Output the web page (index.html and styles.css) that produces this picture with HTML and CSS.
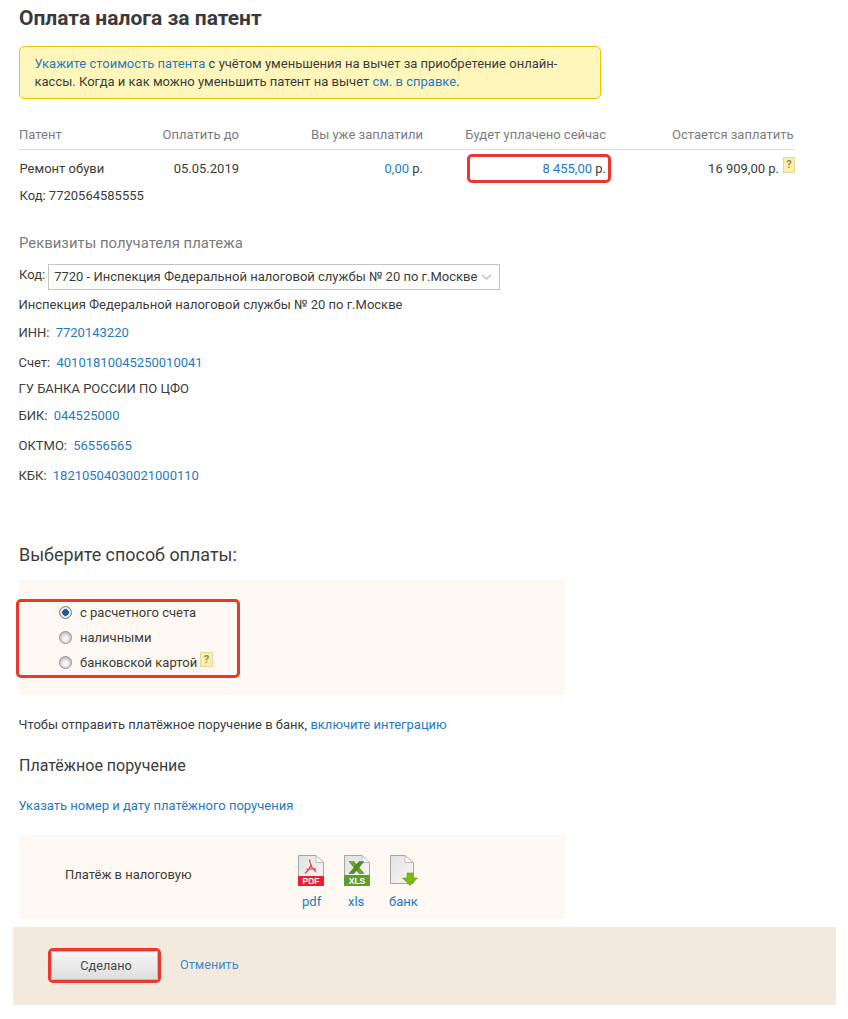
FILE: index.html
```html
<!DOCTYPE html>
<html lang="ru">
<head>
<meta charset="utf-8">
<title>Оплата налога за патент</title>
<link rel="stylesheet" href="styles.css">
</head>
<body>
<svg class="defs" width="0" height="0" aria-hidden="true">
  <defs>
    <linearGradient id="paper" x1="0" y1="0" x2="1" y2="1">
      <stop offset="0" stop-color="#e2e2e2"/>
      <stop offset="1" stop-color="#f8f8f8"/>
    </linearGradient>
  </defs>
</svg>
<main class="page">
  <h1 class="title">Оплата налога за патент</h1>
  <div class="notice"><a href="#">Укажите стоимость патента</a> с учётом уменьшения на вычет за приобретение онлайн-кассы. Когда и как можно уменьшить патент на вычет <a href="#">см. в справке</a>.</div>

  <div class="tbl">
    <div class="th">Патент</div>
    <div class="th r">Оплатить до</div>
    <div class="th r">Вы уже заплатили</div>
    <div class="th r">Будет уплачено сейчас</div>
    <div class="th r th-rest">Остается заплатить</div>
    <div class="td name">Ремонт обуви</div>
    <div class="td r">05.05.2019</div>
    <div class="td r"><a href="#">0,00</a> р.</div>
    <div class="td r td-sum"><div class="red sum"><a href="#">8 455,00</a> р.</div></div>
    <div class="td r rest">16 909,00 р.<span class="q q-rest">?</span></div>
  </div>
  <div class="code">Код: 7720564585555</div>

  <h2 class="req-title">Реквизиты получателя платежа</h2>
  <div class="sel-row">
    <span>Код:</span>
    <div class="select"><span>7720 - Инспекция Федеральной налоговой службы № 20 по г.Москве</span>
      <svg class="chev" width="11" height="6" viewBox="0 0 11 6"><path d="M1 .8 5.500 5 10 .8" fill="none" stroke="#b4b4b4" stroke-width="1.100"/></svg>
    </div>
  </div>
  <div class="line l-insp">Инспекция Федеральной налоговой службы № 20 по г.Москве</div>
  <div class="line l-inn">ИНН: <a href="#">7720143220</a></div>
  <div class="line l-acc">Счет: <a href="#">40101810045250010041</a></div>
  <div class="line l-bank">ГУ БАНКА РОССИИ ПО ЦФО</div>
  <div class="line l-bik">БИК: <a href="#">044525000</a></div>
  <div class="line l-okt">ОКТМО: <a href="#">56556565</a></div>
  <div class="line l-kbk">КБК: <a href="#">18210504030021000110</a></div>

  <h2 class="pay-title">Выберите способ оплаты:</h2>
  <div class="pay-panel">
    <div class="red radios">
      <div class="radio-row"><span class="radio on"></span>с расчетного счета</div>
      <div class="radio-row"><span class="radio"></span>наличными</div>
      <div class="radio-row"><span class="radio"></span>банковской картой<span class="q q-card">?</span></div>
    </div>
  </div>

  <p class="integr">Чтобы отправить платёжное поручение в банк, <a href="#">включите интеграцию</a></p>
  <h3 class="order-title">Платёжное поручение</h3>
  <p class="order-link"><a href="#">Указать номер и дату платёжного поручения</a></p>

  <div class="files">
    <div class="files-label">Платёж в налоговую</div>
    <a class="file f-pdf" href="#">
      <svg width="28" height="32" viewBox="0 0 28 32">
        <path d="M1.500 .5H19L26.500 7.500V30.500H1.500Z" fill="url(#paper)" stroke="#a6a6a6"/>
        <path d="M19 .5V7.500H26.500Z" fill="#fff" stroke="#bdbdbd"/>
        <rect x="1" y="21" width="26" height="10" fill="#e8202f"/>
        <path d="M12.500 4.500c.5 5 2.500 9 6.500 12.500M14.500 9.500C13 13 11 16 8 18.500M9.500 14.500c3-1 6-1 9.500-.5" fill="none" stroke="#e8444f" stroke-width="1.300"/>
        <text x="14" y="29.300" class="ftxt">PDF</text>
      </svg>
      <span>pdf</span>
    </a>
    <a class="file f-xls" href="#">
      <svg width="28" height="32" viewBox="0 0 28 32">
        <path d="M1.500 .5H19L26.500 7.500V30.500H1.500Z" fill="url(#paper)" stroke="#a6a6a6"/>
        <path d="M19 .5V7.500H26.500Z" fill="#fff" stroke="#bdbdbd"/>
        <rect x="1" y="20" width="26" height="11" fill="#5f9e2e"/>
        <path d="M6 6.500h5l10 12h-5Z" fill="#6aa632" stroke="#3f7a1c" stroke-width=".5"/>
        <path d="M21 6.500h-5L6 18.500h5Z" fill="#4f8f22" stroke="#3f7a1c" stroke-width=".5"/>
        <text x="14" y="29" class="ftxt">XLS</text>
      </svg>
      <span>xls</span>
    </a>
    <a class="file f-bank" href="#">
      <svg width="29" height="32" viewBox="0 0 29 32">
        <path d="M1.500 .5H16L24.500 7.500V28.500H1.500Z" fill="url(#paper)" stroke="#a6a6a6"/>
        <path d="M16 .5V7.500H24.500Z" fill="#fff" stroke="#bdbdbd"/>
        <path d="M18 18h6v5h4.500L21 30.500 13.500 23H18Z" fill="#7dbb12" stroke="#649c0c" stroke-width=".6"/>
      </svg>
      <span>банк</span>
    </a>
  </div>
</main>

<footer class="actions">
  <div class="red btn-wrap"><button class="btn" type="button">Сделано</button></div>
  <a class="cancel" href="#">Отменить</a>
</footer>
</body>
</html>
```

FILE: styles.css
```css
* { box-sizing: border-box; }
html, body { margin: 0; padding: 0; }
body {
  width: 848px;
  height: 1019px;
  overflow: hidden;
  background: #fff;
  color: #3c3c3c;
  font: 13px/18px Roboto, "Liberation Sans", sans-serif;
}
a { color: #1f7ac2; text-decoration: none; }
.defs { position: absolute; }
.page { padding: 0 0 0 19px; }
.title {
  margin: 0;
  padding-top: 6px;
  height: 46px;
  font-size: 21px;
  line-height: 24px;
  font-weight: 700;
  color: #3a3a3a;
}
.notice {
  width: 582px;
  height: 53px;
  padding: 8px 14px 8px 14.500px;
  background: #fff6bb;
  border: 1px solid #e8c800;
  border-radius: 5px;
  line-height: 18px;
}
.tbl {
  width: 776px;
  margin-top: 27px;
  display: grid;
  grid-template-columns: 100px 120px 184px 183px 189px;
}
.th {
  height: 24px;
  color: #7c7c7c;
  border-bottom: 1px solid #dcdcdc;
  line-height: 18px;
}
.r { text-align: right; }
.th-rest { padding-right: 1.500px; }
.td { height: 35px; padding-top: 10px; line-height: 18px; }
.name { padding-left: .5px; }
.td-sum { padding-top: 4px; }
.rest { padding-right: 16px; position: relative; }
.red { border: 3px solid #e8392e; border-radius: 5px; }
.sum {
  width: 144px;
  height: 29px;
  margin-left: 44px;
  padding: 3px 2px 0 0;
  text-align: right;
}
.q {
  display: inline-block;
  background: #fbeeaa;
  border: 1px solid #e3d9a0;
  color: #9a8a50;
  font-size: 11px;
  line-height: 13px;
  font-weight: 700;
  text-align: center;
}
.q-rest { position: absolute; right: 0; top: 7px; width: 12px; height: 16px; }
.q-card { position: absolute; left: 181px; top: 50px; width: 13px; height: 15px; }
.code { height: 18px; margin-top: 2px; padding-left: .5px; }
.req-title {
  margin: 29px 0 0;
  font-size: 14.900px;
  line-height: 18px;
  font-weight: 400;
  color: #7c7c7c;
}
.sel-row { display: flex; align-items: flex-start; gap: 3px; height: 26px; margin-top: 12px; }
.sel-row > span { line-height: 22px; }
.select {
  width: 452px;
  height: 26px;
  padding: 3px 7px 3px 5px;
  border: 1px solid #c4c4c4;
  display: flex;
  align-items: center;
  justify-content: space-between;
  white-space: nowrap;
}
.line { line-height: 18px; margin-left: -.5px; }
.line a { margin-left: 3px; }
.l-insp { margin-top: 6px; }
.l-inn { margin-top: 10px; }
.l-acc { margin-top: 12px; }
.l-bank { margin-top: 8px; }
.l-bik { margin-top: 9px; }
.l-okt { margin-top: 12px; }
.l-kbk { margin-top: 12px; }
.pay-title {
  margin: 59px 0 0;
  font-size: 17.900px;
  line-height: 22px;
  font-weight: 400;
  color: #3c3c3c;
}
.pay-panel {
  width: 546px;
  height: 115px;
  margin-top: 14px;
  padding: 19px 0 0;
  background: #fdf8f1;
}
.radios {
  width: 224px;
  height: 79px;
  margin-left: -3px;
  padding: 0 0 0 40px;
  position: relative;
}
.radio-row { display: flex; align-items: center; height: 25px; }
.radio-row:first-child { margin-top: -2px; }
.radio {
  width: 13px;
  height: 13px;
  margin-right: 8px;
  border-radius: 50%;
  border: 1px solid #8f8f8f;
  background: radial-gradient(circle at 50% 60%, #f4f4f4 0 2px, #c4c4c4 6px);
}
.radio.on {
  border-color: #7d7d7d;
  background: radial-gradient(circle, #0f5f9a 0 3px, #e4e4e4 3.600px);
}
.integr { margin: 21px 0 0 -.5px; }
.order-title {
  margin: 22px 0 0;
  font-size: 16px;
  line-height: 20px;
  font-weight: 400;
  color: #3c3c3c;
}
.order-link { margin: 21px 0 0 -.5px; }
.files {
  width: 546px;
  height: 84px;
  margin-top: 20px;
  padding: 20px 0 0 46px;
  background: #fdf8f1;
  display: flex;
}
.files-label { width: 232px; padding-top: 11px; }
.file {
  width: 46px;
  display: flex;
  flex-direction: column;
  align-items: flex-start;
}
.file svg { display: block; }
.f-pdf span { margin-left: 5px; }
.f-xls span { margin-left: 5px; }
.f-bank span { margin-left: 0; }
.file span { line-height: 18px; margin-top: 6px; }
.ftxt {
  font: 700 8.500px "Liberation Sans", sans-serif;
  fill: #fff;
  text-anchor: middle;
}
.actions {
  position: absolute;
  left: 13px;
  top: 927px;
  width: 823px;
  height: 78px;
  padding: 21px 0 0 35px;
  background: #f3eadd;
  display: flex;
  align-items: flex-start;
  gap: 19px;
}
.btn-wrap { width: 113px; height: 35px; }
.btn {
  display: block;
  width: 100%;
  height: 100%;
  padding: 0 0 0 3px;
  border: 1px solid #bdbdbd;
  background: linear-gradient(#f7f7f7, #dedede);
  color: #4a4a4a;
  font: 12.700px Roboto, "Liberation Sans", sans-serif;
}
.cancel { margin-top: 8px; font-size: 12.700px; color: #3f8ac8; }
```
